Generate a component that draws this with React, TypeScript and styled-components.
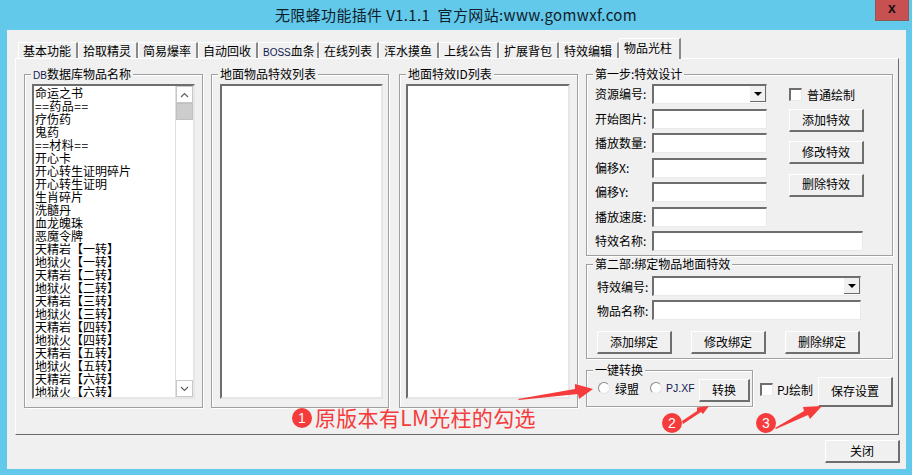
import React from "react";
import styled, { createGlobalStyle } from "styled-components";

const GlobalStyle = createGlobalStyle`
    html, body {
        margin: 0;
        padding: 0;
        background: #63c9ea;
    }
    body {
        font-family: "Noto Sans CJK SC", "Liberation Sans", sans-serif;
        font-size: 12px;
        color: #000;
    }
`;

const Desktop = styled.div`
    position: relative;
    width: 912px;
    height: 475px;
    overflow: hidden;
    background: #63c9ea;
`;

const TitleBar = styled.div`
    display: grid;
    grid-template-columns: 1fr auto 1fr;
    height: 30px;
`;

const Title = styled.div`
    grid-column: 2;
    font-size: 15px;
    letter-spacing: 0.35px;
    line-height: 29px;
    white-space: pre;
    color: #10202a;
`;

const CloseButton = styled.div`
    grid-column: 3;
    justify-self: end;
    width: 34px;
    height: 21px;
    margin-right: 3px;
    box-sizing: border-box;
    border: 1px solid #8a5a55;
    border-top: none;
    background: #c75050;
    font: bold 14px/17px "Liberation Sans", sans-serif;
    text-align: center;
    color: #1a1010;
`;

const Window = styled.div`
    display: flex;
    flex-direction: column;
    box-sizing: border-box;
    width: 899px;
    height: 439px;
    margin-left: 7px;
    padding: 8px 7px 0 8px;
    background: #f0f0f0;
`;

const Tabs = styled.div`
    position: relative;
    z-index: 1;
    display: flex;
    align-items: flex-end;
    height: 21px;
    padding-left: 3px;
    margin-bottom: -1px;
`;

const Tab = styled.div<{ $active?: boolean; $w: number }>`
    box-sizing: border-box;
    width: ${(p) => p.$w}px;
    height: ${(p) => (p.$active ? 21 : 16)}px;
    margin-bottom: ${(p) => (p.$active ? 0 : 1)}px;
    padding-left: 4px;
    border-top: 1px solid #fff;
    border-left: 1px solid #fff;
    border-right: 2px solid #8a8a8a;
    background: #f0f0f0;
    line-height: ${(p) => (p.$active ? 17 : 15)}px;
    white-space: nowrap;
`;

const SmallLatin = styled.span`
    font-family: "Liberation Sans", sans-serif;
    font-size: 10px;
    color: #102050;
`;

const Panel = styled.div`
    display: flex;
    box-sizing: border-box;
    height: 377px;
    padding: 15px 0 0 8px;
    border-top: 1px solid #fff;
    border-left: 1px solid #fff;
    border-right: 1px solid #696969;
    border-bottom: 1px solid #696969;
`;

const Group = styled.div`
    position: relative;
    box-sizing: border-box;
    border: 1px solid #a0a0a0;
    box-shadow: 1px 1px 0 #fff, inset 1px 1px 0 #fff;
`;

const Legend = styled.span`
    position: absolute;
    top: -8px;
    left: 6px;
    padding: 0 2px;
    background: #f0f0f0;
    line-height: 14px;
    white-space: nowrap;
`;

const ListGroup = styled(Group)<{ $w: number; $ml: number; $inset: number; $listW: number }>`
    width: ${(p) => p.$w}px;
    height: 334px;
    margin-left: ${(p) => p.$ml}px;
    padding: 9px 0 0 ${(p) => p.$inset}px;

    & > div:last-child {
        width: ${(p) => p.$listW}px;
    }
`;

const ListBox = styled.div`
    display: flex;
    box-sizing: border-box;
    height: 315px;
    overflow: hidden;
    border-style: solid;
    border-width: 2px;
    border-color: #6e6e6e #e6e6e6 #e6e6e6 #6e6e6e;
    background: #fff;
`;

const Items = styled.div`
    flex: 1;
    padding-left: 1px;
    overflow: hidden;
`;

const Item = styled.div<{ $sep?: boolean }>`
    height: 13px;
    line-height: 13px;
    white-space: nowrap;
    letter-spacing: ${(p) => (p.$sep ? 0.5 : 0)}px;
`;

const ScrollBar = styled.div`
    display: flex;
    flex-direction: column;
    width: 17px;
    background: #fff;
    border-left: 1px solid #e0e0e0;
`;

const ScrollArrow = styled.div`
    display: flex;
    align-items: center;
    justify-content: center;
    height: 17px;
    box-sizing: border-box;
    border: 1px solid #c8c8c8;
`;

const ScrollThumb = styled.div`
    height: 17px;
    background: #cdcdcd;
    border: 1px solid #c0c0c0;
    box-sizing: border-box;
`;

const ScrollTrack = styled.div`
    flex: 1;
`;

const RightColumn = styled.div`
    display: flex;
    flex-direction: column;
    width: 307px;
    margin-left: 8px;
`;

const StepOne = styled(Group)`
    display: grid;
    grid-template-columns: 57px 115px 22px 74px;
    grid-template-rows: repeat(7, 20px);
    row-gap: 4.5px;
    height: 182px;
    padding: 9px 0 0 8px;
`;

const FieldLabel = styled.label`
    grid-column: 1;
    line-height: 19px;
    white-space: nowrap;
`;

const BindLabel = styled(FieldLabel)`
    line-height: 22px;
`;

const TextInput = styled.input<{ $span?: number }>`
    grid-column: 2 / span ${(p) => p.$span ?? 1};
    box-sizing: border-box;
    width: 100%;
    height: 20px;
    margin: 0;
    padding: 0;
    border-style: solid;
    border-width: 2px 1px 1px 2px;
    border-color: #6e6e6e #e9e9e9 #e9e9e9 #6e6e6e;
    background: #fff;
    outline: none;
`;

const Combo = styled.div<{ $span?: number }>`
    grid-column: 2 / span ${(p) => p.$span ?? 1};
    display: flex;
    justify-content: flex-end;
    box-sizing: border-box;
    height: 20px;
    border-style: solid;
    border-width: 2px 1px 1px 2px;
    border-color: #6e6e6e #e9e9e9 #e9e9e9 #6e6e6e;
    background: #fff;
`;

const ComboButton = styled.div`
    display: flex;
    align-items: center;
    justify-content: center;
    width: 16px;
    height: 16px;
    box-sizing: border-box;
    border-right: 1px solid #696969;
    border-bottom: 1px solid #696969;
    background: #f0f0f0;

    &::after {
        content: "";
        border-left: 4px solid transparent;
        border-right: 4px solid transparent;
        border-top: 4px solid #000;
    }
`;

const Actions = styled.div`
    grid-column: 4;
    grid-row: 1 / span 6;
    display: flex;
    flex-direction: column;
    align-items: flex-start;
`;

const CheckRow = styled.label`
    display: flex;
    align-items: center;
    gap: 5px;
    height: 25px;
    padding-bottom: 5px;
    box-sizing: border-box;
    white-space: nowrap;
`;

const CheckBox = styled.input.attrs({ type: "checkbox" })`
    appearance: none;
    flex: none;
    width: 13px;
    height: 13px;
    margin: 0;
    border-style: solid;
    border-width: 2px 1px 1px 2px;
    border-color: #6e6e6e #e9e9e9 #e9e9e9 #6e6e6e;
    background: #fff;
`;

const Radio = styled.input.attrs({ type: "radio" })`
    appearance: none;
    flex: none;
    width: 12px;
    height: 12px;
    margin: 0;
    border: 1px solid #8a8a8a;
    border-right-color: #e4e4e4;
    border-bottom-color: #e4e4e4;
    border-radius: 50%;
    background: #fff;
    box-sizing: border-box;
`;

const Button = styled.button<{ $h?: number }>`
    flex: none;
    box-sizing: border-box;
    width: 75px;
    height: ${(p) => p.$h ?? 23}px;
    padding: 0 0 2px;
    border-style: solid;
    border-width: 1px 2px 2px 1px;
    border-color: #fff #6e6e6e #6e6e6e #fff;
    background: #f0f0f0;
    font: inherit;
    color: #000;
`;

const ActionButton = styled(Button)`
    margin-bottom: 9.25px;
`;

const StepTwo = styled(Group)`
    height: 95px;
    margin-top: 8px;
    padding: 11px 0 0 10px;
`;

const BindGrid = styled.div`
    display: grid;
    grid-template-columns: 55px 209px;
    grid-template-rows: 20px 20px;
    row-gap: 4px;
`;

const BindButtons = styled.div`
    display: flex;
    gap: 19px;
    margin-top: 11px;
`;

const BottomRow = styled.div`
    display: flex;
    align-items: flex-start;
    margin-top: 11px;
`;

const ConvertGroup = styled(Group)`
    display: flex;
    align-items: flex-start;
    width: 167px;
    height: 37px;
    flex: none;
    padding: 8px 0 0 11px;
`;

const RadioLabel = styled.label<{ $w: number; $small?: boolean }>`
    display: flex;
    align-items: center;
    gap: ${(p) => (p.$small ? 4 : 5)}px;
    width: ${(p) => p.$w}px;
    height: 18px;
    white-space: nowrap;
    font-family: ${(p) => (p.$small ? '"Liberation Sans", sans-serif' : "inherit")};
    font-size: ${(p) => (p.$small ? 10.5 : 12)}px;
    color: ${(p) => (p.$small ? "#102050" : "#000")};
`;

const ConvertButton = styled(Button)`
    width: 51px;
`;

const PjCheck = styled(CheckRow)`
    gap: 4px;
    width: 60px;
    height: 22px;
    padding-bottom: 1px;
    margin: 9px 0 0 7px;
`;

const Footer = styled.div`
    display: flex;
    justify-content: flex-end;
    margin: 5px -1px 0 0;
`;

const SaveButton = styled(Button)`
    margin-top: 7px;
`;

const Arrows = styled.svg`
    position: absolute;
    inset: 0;
    width: 912px;
    height: 475px;
    pointer-events: none;
`;

const Badge = styled.span<{ $x: number; $y: number }>`
    position: absolute;
    left: ${(p) => p.$x}px;
    top: ${(p) => p.$y}px;
    width: 20px;
    height: 20px;
    border-radius: 50%;
    background: #f53b3b;
    color: #fff;
    font: 14px/20px "Liberation Sans", sans-serif;
    text-align: center;
`;

const Note = styled.span`
    position: absolute;
    left: 315px;
    top: 403px;
    font-size: 21px;
    letter-spacing: 0.3px;
    line-height: 28px;
    color: #f53b3b;
    white-space: nowrap;
`;

const tabs = [
    { name: "基本功能", w: 60 },
    { name: "拾取精灵", w: 60 },
    { name: "简易爆率", w: 60 },
    { name: "自动回收", w: 60 },
    { name: "血条", latin: "BOSS", w: 61 },
    { name: "在线列表", w: 60 },
    { name: "浑水摸鱼", w: 60 },
    { name: "上线公告", w: 60 },
    { name: "扩展背包", w: 60 },
    { name: "特效编辑", w: 60 },
    { name: "物品光柱", w: 62, active: true },
];

const turns = ["一", "二", "三", "四", "五", "六"];

const goods = [
    "命运之书",
    "==药品==",
    "疗伤药",
    "鬼药",
    "==材料==",
    "开心卡",
    "开心转生证明碎片",
    "开心转生证明",
    "生肖碎片",
    "洗髓丹",
    "血龙魄珠",
    "恶魔令牌",
    ...turns.flatMap((t) => [`天精岩【${t}转】`, `地狱火【${t}转】`]),
];

const fields = ["开始图片", "播放数量", "偏移X", "偏移Y", "播放速度"];

const Chevron = ({ up }: { up?: boolean }) => (
    <svg width="9" height="6" viewBox="0 0 9 6">
        <polyline
            points={up ? "1,5 4.5,1.5 8,5" : "1,1 4.5,4.5 8,1"}
            fill="none"
            stroke="#606060"
            strokeWidth="1.2"
        />
    </svg>
);

const App = () => {
    return (
        <Desktop>
            <GlobalStyle />
            <TitleBar>
                <Title>无限蜂功能插件 V1.1.1  官方网站:www.gomwxf.com</Title>
                <CloseButton>x</CloseButton>
            </TitleBar>
            <Window>
                <Tabs>
                    {tabs.map((t) => (
                        <Tab key={t.name} $w={t.w} $active={t.active}>
                            {t.latin && <SmallLatin>{t.latin}</SmallLatin>}
                            {t.name}
                        </Tab>
                    ))}
                </Tabs>
                <Panel>
                    <ListGroup $w={179} $ml={0} $inset={7} $listW={163}>
                        <Legend><SmallLatin>DB</SmallLatin>数据库物品名称</Legend>
                        <ListBox>
                            <Items>
                                {goods.map((g) => <Item key={g} $sep={g.startsWith("==")}>{g}</Item>)}
                            </Items>
                            <ScrollBar>
                                <ScrollArrow><Chevron up /></ScrollArrow>
                                <ScrollThumb />
                                <ScrollTrack />
                                <ScrollArrow><Chevron /></ScrollArrow>
                            </ScrollBar>
                        </ListBox>
                    </ListGroup>
                    <ListGroup $w={178} $ml={8} $inset={8} $listW={163}>
                        <Legend>地面物品特效列表</Legend>
                        <ListBox />
                    </ListGroup>
                    <ListGroup $w={179} $ml={10} $inset={6} $listW={164}>
                        <Legend>地面特效ID列表</Legend>
                        <ListBox />
                    </ListGroup>
                    <RightColumn>
                        <StepOne>
                            <Legend>第一步:特效设计</Legend>
                            <FieldLabel>资源编号:</FieldLabel>
                            <Combo><ComboButton /></Combo>
                            <Actions>
                                <CheckRow><CheckBox />普通绘制</CheckRow>
                                <ActionButton>添加特效</ActionButton>
                                <ActionButton>修改特效</ActionButton>
                                <ActionButton>删除特效</ActionButton>
                            </Actions>
                            {fields.map((f) => (
                                <React.Fragment key={f}>
                                    <FieldLabel>{f}:</FieldLabel>
                                    <TextInput />
                                </React.Fragment>
                            ))}
                            <FieldLabel>特效名称:</FieldLabel>
                            <TextInput $span={3} />
                        </StepOne>
                        <StepTwo>
                            <Legend>第二部:绑定物品地面特效</Legend>
                            <BindGrid>
                                <BindLabel>特效编号:</BindLabel>
                                <Combo><ComboButton /></Combo>
                                <BindLabel>物品名称:</BindLabel>
                                <TextInput />
                            </BindGrid>
                            <BindButtons>
                                <Button>添加绑定</Button>
                                <Button>修改绑定</Button>
                                <Button>删除绑定</Button>
                            </BindButtons>
                        </StepTwo>
                        <BottomRow>
                            <ConvertGroup>
                                <Legend>一键转换</Legend>
                                <RadioLabel $w={52}><Radio name="mode" />绿盟</RadioLabel>
                                <RadioLabel $w={49} $small><Radio name="mode" />PJ.XF</RadioLabel>
                                <ConvertButton>转换</ConvertButton>
                            </ConvertGroup>
                            <PjCheck><CheckBox />PJ绘制</PjCheck>
                            <SaveButton $h={30}>保存设置</SaveButton>
                        </BottomRow>
                    </RightColumn>
                </Panel>
                <Footer>
                    <Button>关闭</Button>
                </Footer>
            </Window>
            <Arrows viewBox="0 0 912 475">
                <polygon points="518,399 575,389 575,384 593,389 579,399 578,394 519,400" fill="#f53b3b" />
                <polygon points="682,421 697,411 697,407.5 709,406 703,414 701,412 683,424" fill="#f53b3b" />
                <polygon points="775,428 804,411 803,407 822,406 810,419 808,415 776,429" fill="#f53b3b" />
            </Arrows>
            <Badge $x={292} $y={408}>1</Badge>
            <Note>原版本有LM光柱的勾选</Note>
            <Badge $x={662} $y={413}>2</Badge>
            <Badge $x={756} $y={413}>3</Badge>
        </Desktop>
    );
};

export default App;
